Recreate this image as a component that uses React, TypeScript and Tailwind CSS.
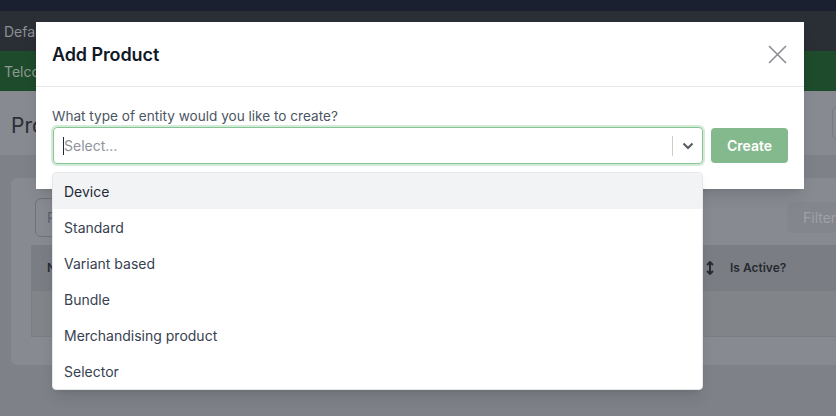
import React from "react";

const options = [
  "Device",
  "Standard",
  "Variant based",
  "Bundle",
  "Merchandising product",
  "Selector",
];

export default function App() {
  return (
    <div className="relative w-[836px] h-[416px] overflow-hidden font-['Inter',sans-serif] bg-[#7e8188]">
      {/* Dimmed page behind the modal */}
      <div className="w-[900px] flex flex-col h-full">
        <div className="h-[11px] bg-[#1b2030]" />
        <div className="h-[40px] bg-[#2a2e35] flex items-center px-1 text-[14px] text-[#8b8e94]">
          Default
        </div>
        <div className="h-[40px] bg-[#1d4b2b] flex items-center px-1 text-[14px] text-[#8d9a91]">
          Telco
        </div>
        <div className="h-[64px] bg-[#878a91] flex items-start justify-between pl-[11px] pr-[11px]">
          <h1 className="text-[21px] text-[#2b2e35] mt-[19px]">Products</h1>
          <div className="w-[57px] h-[34px] mt-[15px] border border-[#787b82] rounded-md bg-[#888b92]" />
        </div>
        <div className="flex-1 px-[11px] pt-[23px]">
          <div className="w-[878px] bg-[#878a91] rounded-md px-5 pt-5 pb-7">
            <div className="flex items-center justify-between">
              <div className="ml-1 w-[220px] h-[39px] border border-[#6f7279] rounded-md flex items-center px-[11px] text-[14px] text-[#5d6067]">
                Product name
              </div>
              <div className="w-[82px] h-[31px] rounded-md bg-[#83868d] flex items-center px-4 text-[14px] text-[#9ea1a7]">
                Filter
              </div>
            </div>
            <div className="mt-2">
              <div className="h-[45px] bg-[#7a7d84] flex items-center px-4 text-[12px] font-semibold text-[#272a31]">
                <div className="w-[668px] flex items-center justify-between">
                  <span>Name</span>
                  <svg width="8" height="14" viewBox="0 0 8 14" className="mr-[1px]">
                    <path d="M4 1v12" stroke="#272a31" strokeWidth="2" />
                    <path d="M1 4l3-3 3 3M1 10l3 3 3-3" stroke="#272a31" strokeWidth="1.8" fill="none" />
                  </svg>
                </div>
                <span className="pl-[15px]">Is Active?</span>
              </div>
              <div className="h-[47px] bg-[#818489] border border-[#7a7d84]" />
            </div>
          </div>
        </div>
      </div>

      {/* Modal */}
      <div className="absolute left-[36px] top-[22px] w-[768px] bg-white shadow-lg">
        <div className="h-[65px] border-b border-[#e5e7eb] flex items-center justify-between pl-4 pr-[17px]">
          <h2 className="text-[18px] font-semibold text-[#111827] tracking-[-0.1px]">Add Product</h2>
          <svg width="19" height="19" viewBox="0 0 19 19">
            <path d="M1 1L18 18M18 1L1 18" stroke="#8a8d93" strokeWidth="1.6" />
          </svg>
        </div>
        <div className="pl-4 pr-4 pt-[20px] pb-[25px]">
          <label className="block h-[18px] leading-[18px] text-[13.6px] text-[#4b5563]">
            What type of entity would you like to create?
          </label>
          <div className="mt-[2px] flex items-center gap-2">
            <div className="relative flex-1 ml-[1px]">
              <div className="h-[37px] border border-[#86c494] rounded-[4px] shadow-[0_0_0_2px_#d5ebd9] flex items-center">
                <div className="flex-1 flex items-center pl-[9px] text-[14px] text-[#8f939a]">
                  <span className="w-px h-[18px] bg-[#1f2937]" />
                  <span>Select...</span>
                </div>
                <span className="w-px h-[20px] bg-[#cccccc]" />
                <div className="w-[29px] flex items-center justify-center">
                  <svg width="12" height="8" viewBox="0 0 12 8">
                    <path d="M1.5 1.5L6 6l4.5-4.5" stroke="#555a62" strokeWidth="2" fill="none" />
                  </svg>
                </div>
              </div>
              <div className="absolute left-[-1px] right-0 top-full mt-[8px] bg-white border border-[#e5e7eb] rounded-[4px] shadow-lg overflow-hidden z-10">
                {options.map((o, i) => (
                  <div
                    key={o}
                    className={
                      i === 0
                        ? "h-[36px] flex items-center pl-[11px] pr-3 text-[14px] bg-[#f2f3f5] text-[#1f2937]"
                        : "h-[36px] flex items-center pl-[11px] pr-3 text-[14px] text-[#374151]"
                    }
                  >
                    {o}
                  </div>
                ))}
              </div>
            </div>
            <button className="w-[77px] h-[35px] rounded-[4px] bg-[#83b98c] text-white text-[14px] font-semibold">
              Create
            </button>
          </div>
        </div>
      </div>
    </div>
  );
}
